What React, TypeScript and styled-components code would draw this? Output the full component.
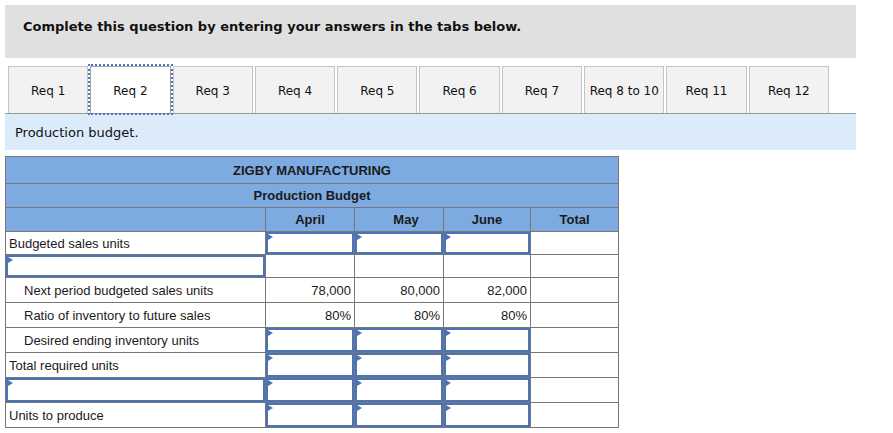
import React from 'react';
import styled, { createGlobalStyle, css } from 'styled-components';

const GlobalStyle = createGlobalStyle`
  html, body {
    margin: 0;
    padding: 0;
    background: #ffffff;
  }
`;

const Page = styled.div`
  width: 851px;
  padding: 5px;
  font-family: 'DejaVu Sans', Verdana, sans-serif;
  color: #111;
`;

const Instructions = styled.div`
  box-sizing: border-box;
  height: 53px;
  padding: 14px 0 0 18px;
  background: #e0e0e0;
  font-size: 13px;
  font-weight: 700;
`;

const TabBar = styled.div`
  display: flex;
  gap: 2px;
  margin-top: 8px;
  padding-left: 3px;
`;

const Tab = styled.div<{ $active?: boolean }>`
  width: 80.3px;
  height: 47px;
  box-sizing: border-box;
  display: flex;
  align-items: center;
  justify-content: center;
  padding-top: 2px;
  font-size: 12px;
  white-space: nowrap;
  background: #f2f2f2;
  border: 1px solid #c4c4c4;
  border-bottom: none;

  ${(p) =>
    p.$active &&
    css`
      background: #ffffff;
      border-color: #a0a0a0;
      outline: 2px dotted #4a78c0;
      outline-offset: 0;
      position: relative;
      z-index: 1;
    `}
`;

const Prompt = styled.div`
  height: 36px;
  display: flex;
  align-items: center;
  padding-left: 10px;
  background: #dbebf9;
  border-top: 1px solid #999;
  font-size: 13px;
`;

const Sheet = styled.table`
  margin-top: 6px;
  border-collapse: collapse;
  table-layout: fixed;
  width: 613px;
  font-family: 'Liberation Sans', Arial, sans-serif;
  font-size: 13px;
  color: #1a1a1a;
  border: 1px solid #777;
`;

const Row = styled.tr<{ $h: number }>`
  height: ${(p) => p.$h}px;
`;

const HeadCell = styled.th<{ $shift?: number }>`
  background: #7eaae2;
  border: 1px solid #777;
  font-weight: 700;
  text-align: center;
  padding: 0 0 0 ${(p) => p.$shift ?? 0}px;
  color: #1a1a1a;
`;

const LabelCell = styled.td<{ $indent?: boolean }>`
  border: 1px solid #777;
  padding: 0 0 0 ${(p) => (p.$indent ? '18px' : '3px')};
  white-space: nowrap;
  vertical-align: middle;
`;

const ValueCell = styled.td<{ $dark?: boolean }>`
  border: 1px solid #777;
  ${(p) => p.$dark && 'border-top-color: #000;'}
  padding: 0 3px 0 0;
  text-align: right;
  vertical-align: middle;
`;

const InputCell = styled.td<{ $dark?: boolean }>`
  border: 1px solid #777;
  ${(p) => p.$dark && 'border-top-color: #000;'}
  padding: 0;
  vertical-align: top;
`;

const Entry = styled.div<{ $h: number }>`
  position: relative;
  box-sizing: border-box;
  height: ${(p) => p.$h}px;
  border: 2px solid #4b74b6;
  background: #fff;

  &::before {
    content: '';
    position: absolute;
    top: 0;
    left: 0;
    border-top: 3px solid transparent;
    border-bottom: 3px solid transparent;
    border-left: 5px solid #4b74b6;
  }
`;

const tabs = [
  'Req 1',
  'Req 2',
  'Req 3',
  'Req 4',
  'Req 5',
  'Req 6',
  'Req 7',
  'Req 8 to 10',
  'Req 11',
  'Req 12',
];

const months = ['April', 'May', 'June'];

const Inputs: React.FC<{ h: number; dark?: boolean }> = ({ h, dark }) => (
  <>
    {months.map((m) => (
      <InputCell key={m} $dark={dark}>
        <Entry $h={h - 1} />
      </InputCell>
    ))}
    <ValueCell $dark={dark} />
  </>
);

const Blanks: React.FC = () => (
  <>
    {months.map((m) => (
      <ValueCell key={m} />
    ))}
    <ValueCell />
  </>
);

const App: React.FC = () => {
  return (
    <>
      <GlobalStyle />
      <Page>
        <Instructions>
          Complete this question by entering your answers in the tabs below.
        </Instructions>

        <TabBar>
          {tabs.map((t) => (
            <Tab key={t} $active={t === 'Req 2'}>
              {t}
            </Tab>
          ))}
        </TabBar>

        <Prompt>Production budget.</Prompt>

        <Sheet>
          <colgroup>
            <col style={{ width: 260 }} />
            <col style={{ width: 89 }} />
            <col style={{ width: 89 }} />
            <col style={{ width: 87 }} />
            <col style={{ width: 88 }} />
          </colgroup>
          <tbody>
            <Row $h={27}>
              <HeadCell colSpan={5}>ZIGBY MANUFACTURING</HeadCell>
            </Row>
            <Row $h={24}>
              <HeadCell colSpan={5}>Production Budget</HeadCell>
            </Row>
            <Row $h={24}>
              <HeadCell />
              <HeadCell>April</HeadCell>
              <HeadCell $shift={14}>May</HeadCell>
              <HeadCell>June</HeadCell>
              <HeadCell>Total</HeadCell>
            </Row>

            <Row $h={23}>
              <LabelCell>Budgeted sales units</LabelCell>
              <Inputs h={23} />
            </Row>
            <Row $h={23}>
              <InputCell>
                <Entry $h={22} />
              </InputCell>
              <Blanks />
            </Row>
            <Row $h={25}>
              <LabelCell $indent>Next period budgeted sales units</LabelCell>
              <ValueCell>78,000</ValueCell>
              <ValueCell>80,000</ValueCell>
              <ValueCell>82,000</ValueCell>
              <ValueCell />
            </Row>
            <Row $h={25}>
              <LabelCell $indent>Ratio of inventory to future sales</LabelCell>
              <ValueCell>80%</ValueCell>
              <ValueCell>80%</ValueCell>
              <ValueCell>80%</ValueCell>
              <ValueCell />
            </Row>
            <Row $h={25}>
              <LabelCell $indent>Desired ending inventory units</LabelCell>
              <Inputs h={25} dark />
            </Row>
            <Row $h={25}>
              <LabelCell>Total required units</LabelCell>
              <Inputs h={25} />
            </Row>
            <Row $h={25}>
              <InputCell>
                <Entry $h={24} />
              </InputCell>
              <Inputs h={25} />
            </Row>
            <Row $h={25}>
              <LabelCell>Units to produce</LabelCell>
              <Inputs h={25} dark />
            </Row>
          </tbody>
        </Sheet>
      </Page>
    </>
  );
};

export default App;
